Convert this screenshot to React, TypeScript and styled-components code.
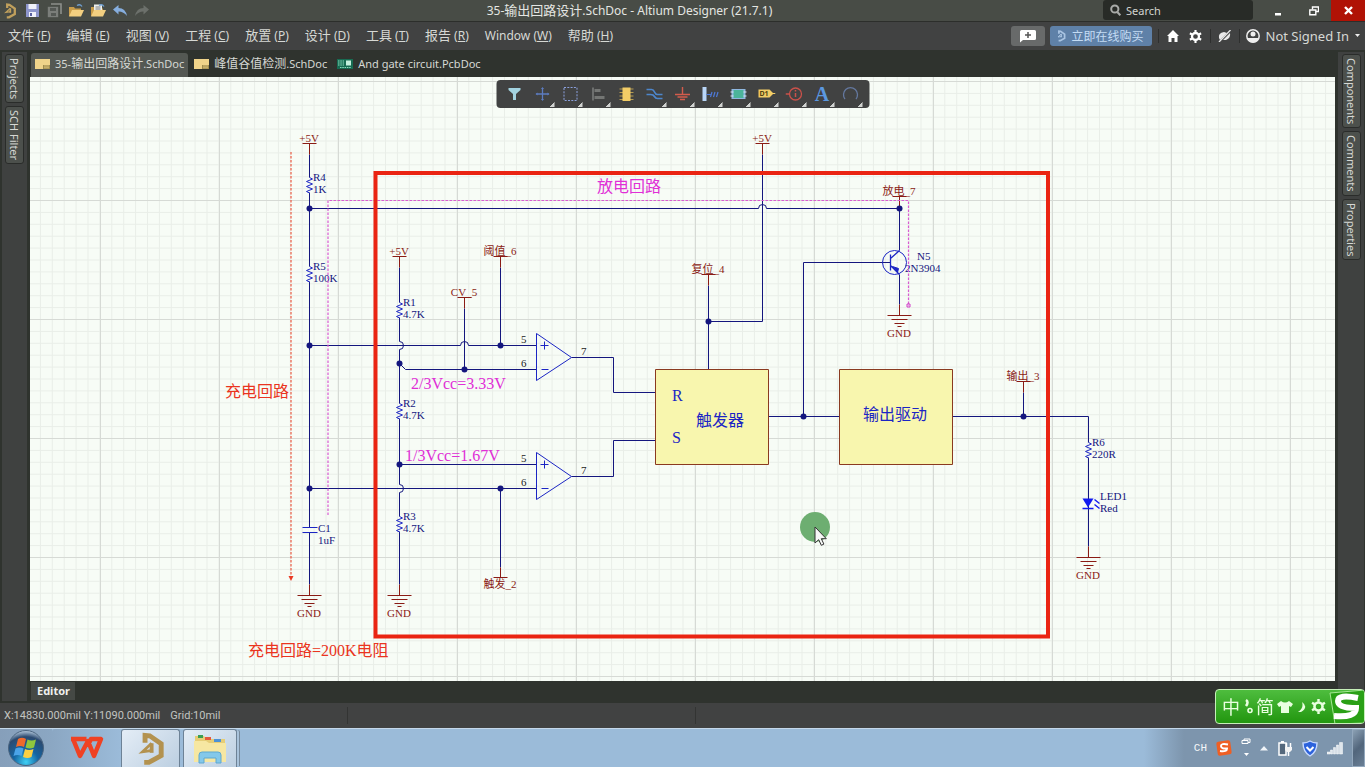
import React, { useState } from 'react';
import styled, { createGlobalStyle } from 'styled-components';

const GlobalStyle = createGlobalStyle`
  * {
    box-sizing: border-box;
  }
  body {
    margin: 0;
    background: #2f332e;
    font-family: "Noto Sans", "Noto Sans CJK SC", sans-serif;
    font-size: 12px;
    color: #d6d8d4;
    overflow: hidden;
  }
  button, input {
    font: inherit;
    color: inherit;
    border: none;
    padding: 0;
    margin: 0;
    background: none;
  }
  svg {
    display: block;
    flex: none;
  }
`;

const Window = styled.div`
  display: flex;
  flex-direction: column;
  height: 100vh;
`;

const TitleBar = styled.header`
  display: grid;
  grid-template-columns: 1fr auto 1fr;
  align-items: center;
  height: 22px;
  flex: none;
  background: #484c46;
  border-bottom: 1px solid #2c2e2b;
`;

const QuickAccess = styled.div`
  display: flex;
  gap: 6px;
  padding-left: 2px;
`;

const IconButton = styled.button`
  display: flex;
  align-items: center;
  justify-content: center;
  width: 16px;
  height: 18px;
`;

const Title = styled.h1`
  margin: 0;
  font-size: 12px;
  font-weight: 400;
  line-height: 20px;
  color: #e4e6e2;
  white-space: nowrap;
  padding-right: 106px;
`;

const Han = styled.span`
  font-size: calc(1em + 1px);
  line-height: 1;
`;

const TitleRight = styled.div`
  display: flex;
  justify-content: flex-end;
  align-items: flex-start;
  height: 21px;
  margin-left: -106px;
`;

const SearchBox = styled.label`
  display: flex;
  align-items: center;
  gap: 5px;
  width: 150px;
  height: 20px;
  margin-right: 8px;
  padding-left: 7px;
  border-radius: 3px;
  background: #282b27;
`;

const SearchInput = styled.input`
  width: 100px;
  outline: none;
  font-size: 11px;
  &::placeholder {
    color: #d2d4d0;
    opacity: 1;
  }
`;

const WindowButton = styled.button<{ $close?: boolean }>`
  display: flex;
  align-items: center;
  justify-content: center;
  width: ${p => (p.$close ? 34 : 35)}px;
  height: 21px;
  background: ${p => (p.$close ? '#b01205' : 'transparent')};
`;

const MenuBar = styled.div`
  display: flex;
  align-items: center;
  justify-content: space-between;
  height: 28px;
  flex: none;
  background: #414242;
`;

const Menus = styled.nav`
  display: flex;
`;

const MenuButton = styled.button`
  padding: 0 8px;
  line-height: 26px;
  white-space: nowrap;
`;

const Account = styled.div`
  display: flex;
  align-items: center;
  height: 28px;
  padding-right: 5px;
`;

const NoteButton = styled.button`
  display: flex;
  align-items: center;
  justify-content: center;
  width: 34px;
  height: 20px;
  margin-right: 5px;
  border-radius: 3px;
  background: #686a6a;
`;

const BuyButton = styled.button`
  display: flex;
  align-items: center;
  gap: 5px;
  width: 102px;
  height: 20px;
  padding: 0 5px;
  border-radius: 3px;
  background: #5f81a8;
  color: #c4dcf4;
  white-space: nowrap;
`;

const Shortcuts = styled.div`
  display: flex;
  gap: 7px;
`;

const Divider = styled.span`
  width: 1px;
  height: 14px;
  margin: 0 6px;
  background: #2e2f2e;
`;

const SignIn = styled.button`
  display: flex;
  align-items: center;
  gap: 6px;
  padding-bottom: 1px;
  font-size: 13px;
  white-space: nowrap;
`;

const Workspace = styled.main`
  display: flex;
  flex: 1;
  min-height: 0;
`;

const SidePanel = styled.aside<{ $right?: boolean }>`
  display: flex;
  flex-direction: column;
  align-items: center;
  gap: 3px;
  width: 30px;
  flex: none;
  padding-top: 2px;
  background: #3f4140;
  border: solid #2f332e;
  border-width: ${p => (p.$right ? '2px 1px 2px 3px' : '2px 3px 2px 2px')};
`;

const SideTab = styled.button`
  writing-mode: vertical-rl;
  width: 19px;
  padding: 3px 0;
  font-size: 11px;
  line-height: 17px;
  background: #4c504c;
  border: 1px solid #2a2c2a;
  border-radius: 3px;
  white-space: nowrap;
`;

const Documents = styled.section`
  display: flex;
  flex-direction: column;
  flex: 1;
  min-width: 0;
`;

const DocumentTabs = styled.div`
  display: flex;
  align-items: flex-end;
  gap: 2px;
  height: 27px;
  flex: none;
  padding-left: 1px;
`;

const DocumentTab = styled.button<{ $active?: boolean }>`
  display: flex;
  align-items: center;
  gap: 5px;
  height: 24px;
  padding: 0 4px 3px;
  border-radius: 3px 3px 0 0;
  background: ${p => (p.$active ? '#545853' : 'transparent')};
  font-size: 11px;
  white-space: nowrap;
`;

const Canvas = styled.div`
  position: relative;
  flex: 1;
  min-height: 0;
  overflow: hidden;
  background: #f7fcf6;
`;

const Sheet = styled.svg`
  width: 100%;
  height: 100%;
  font-family: "Liberation Serif", "Noto Sans CJK SC", serif;
`;

const ActiveBar = styled.div`
  position: absolute;
  top: 3px;
  left: 50%;
  transform: translateX(-50%);
  display: flex;
  padding: 0 5px 0 4px;
  border-radius: 4px;
  background: #414242;
`;

const Tool = styled.button<{ $menu?: boolean }>`
  display: flex;
  align-items: center;
  justify-content: center;
  width: 28px;
  height: 28px;
  background: ${p =>
    p.$menu
      ? 'linear-gradient(135deg, transparent 50%, #d0d2d0 50%) right 2px bottom 1px / 5px 5px no-repeat'
      : 'none'};
`;

const ToolLetter = styled.span`
  font-family: "Liberation Serif", serif;
  font-size: 20px;
  font-weight: 700;
  line-height: 26px;
  color: #5b98e0;
`;

const EditorStrip = styled.div`
  height: 22px;
  flex: none;
  padding: 1px 0 0 1px;
`;

const EditorTab = styled.button`
  height: 18px;
  padding: 0 5px 0 6px;
  background: #454945;
  color: #f0f0ee;
  font-size: 11px;
  font-weight: 700;
  line-height: 18px;
`;

const StatusBar = styled.footer`
  display: flex;
  align-items: center;
  height: 25px;
  flex: none;
  padding-left: 4px;
  background: #414242;
  font-family: Roboto, sans-serif;
  font-size: 11px;
  color: #c2c4c0;
`;

const StatusCell = styled.span`
  display: flex;
  align-items: center;
  gap: 10px;
  width: 344px;
  height: 17px;
  border-right: 1px solid #333433;
  & + & {
    width: 348px;
  }
`;

const Taskbar = styled.div`
  display: flex;
  height: 39px;
  flex: none;
  background: #9bbbd9;
  border-top: 1px solid #c4d8ea;
`;

const StartButton = styled.button`
  display: flex;
  align-items: center;
  justify-content: center;
  width: 52px;
  background: linear-gradient(90deg, #869fba, #8ba7c3);
`;

const TaskButton = styled.button<{ $open?: boolean }>`
  display: flex;
  align-items: center;
  justify-content: center;
  width: ${p => (p.$open ? 59 : 69)}px;
  margin-right: ${p => (p.$open ? 3 : 0)}px;
  background: ${p => (p.$open ? 'linear-gradient(135deg, #e4edf6, #bccfe1)' : 'linear-gradient(90deg, #8ba7c3, #9bbbd9)')};
  border: ${p => (p.$open ? '1px solid #6d8296' : 'none')};
  border-bottom: none;
  border-radius: 3px 3px 0 0;
`;

const TaskStack = styled(TaskButton)`
  width: 54px;
  box-shadow: 3px 0 0 -1px #a9c3db, 4px 0 0 -1px #75899c;
`;

const Tray = styled.div`
  display: flex;
  align-items: center;
  gap: 9px;
  margin-left: auto;
  padding-left: 50px;
  background: linear-gradient(90deg, #9bbbd9, #7d95ad 40px);
`;

const Language = styled.span`
  font-family: "Liberation Mono", monospace;
  font-size: 11px;
  line-height: 14px;
  color: #f4f6f8;
`;

const ShowDesktop = styled.button`
  align-self: stretch;
  width: 13px;
  border: 1px solid #93a8bd;
  background: linear-gradient(135deg, #8ba0b4, #52667c 50%, #6a7f95);
`;

const InputMethod = styled.div`
  position: fixed;
  right: 0;
  bottom: 43px;
  display: flex;
  align-items: center;
  gap: 3px;
  width: 150px;
  height: 35px;
  padding-left: 6px;
  border: 1px solid #c6efb9;
  border-radius: 4px;
  background: linear-gradient(#4ebd3e, #22960f);
  color: #e9ffe0;
  font-size: 18px;
  line-height: 32px;
  overflow: hidden;
`;

const WIRE = '#14167e';
const PART = '#1b25c4';
const PORT = '#8a1b14';

// The UI font draws Chinese a size larger than the Latin beside it
const mixed = (text: string) =>
  text.split(/([\u4e00-\u9fff]+)/).map((part, i) => (i % 2 ? <Han key={i}>{part}</Han> : part));

const Logo = ({ size = 16, color = '#c0a05c' }: { size?: number; color?: string }) => (
  <svg width={size} height={size} viewBox="0 0 16 16" fill="none" stroke={color}>
    <path d="M5.200 5V1.600l2.200.2 5.400 3.700v5.600L7 14.300H4.800" strokeWidth="2.300" />
    <path d="M8.300 5.300v4.500" strokeWidth="1.800" />
    <path d="M8.300 5.300L4 9.300l4.800-.6" strokeWidth="1.300" />
  </svg>
);

const SaveIcon = ({ dim }: { dim?: boolean }) => (
  <svg width="15" height="15" viewBox="0 0 15 15">
    {dim && <path d="M4 1h10v10" fill="none" stroke="#8c8f8b" strokeWidth="1.6" />}
    <path d="M1 1h13v13H1z" fill={dim ? '#7b7e7a' : '#8d95cb'} transform={dim ? 'translate(0 3) scale(.8)' : undefined} />
    <path d={dim ? 'M3 5h6v3H3zM4 10h5v3H4z' : 'M3.5 1h8v5h-8zM4 9h7v5H4z'} fill={dim ? '#555955' : '#f0f1fa'} />
    {!dim && <path d="M5 10h2v3H5z" fill="#5960a0" />}
  </svg>
);

const FolderIcon = ({ page }: { page?: boolean }) => (
  <svg width="16" height="15" viewBox="0 0 16 15">
    <path d="M1 4h5l1 1.5h6V13H1z" fill="#c99d4a" />
    {page && <path d="M4 1.500h8V9H4z" fill="#eef0ee" />}
    {page && <path d="M5.500 4h5M5.500 6h5" stroke="#7c7c7c" />}
    <path d="M1 13.500L4 7h12l-3 6.500z" fill="#f2cf80" />
    <path d="M9 2.500q3-2 5 1" fill="none" stroke="#6f9fd0" strokeWidth="1.300" />
  </svg>
);

const ArrowIcon = ({ redo }: { redo?: boolean }) => (
  <svg width="16" height="14" viewBox="0 0 16 14">
    <g transform={redo ? 'translate(16 0) scale(-1 1)' : undefined}>
      <path d="M1 5.500L6.500 1v3q7 .2 8.500 8-3.500-4.600-8.500-4.500v3z" fill={redo ? '#6c706b' : '#86aede'} />
    </g>
  </svg>
);

const SchIcon = () => (
  <svg width="15" height="12" viewBox="0 0 15 12">
    <path d="M0 1h15v10H0z" fill="#f0d48a" />
    <path d="M8 7h7v4H8z" fill="#a08d4e" />
    <path d="M9 8h5M9 9.800h5" stroke="#f0d48a" strokeWidth=".7" />
  </svg>
);

const PcbIcon = () => (
  <svg width="16" height="12" viewBox="0 0 16 12">
    <path d="M0 1h16v10H0z" fill="#176b52" />
    <path d="M1 3h6M1 5h6M1 7h6M3 9.500h11" stroke="#8fe0c0" strokeDasharray="1.500 .8" />
    <path d="M9 2.500h5v5H9z" fill="#c4f0dd" />
  </svg>
);

const GearIcon = ({ size, fill }: { size: number; fill: string }) => (
  <svg width={size} height={size} viewBox="0 0 16 16">
    <circle cx="8" cy="8" r="4.300" fill="none" stroke={fill} strokeWidth="2.800" />
    <path d="M8 0v3M8 13v3M1.100 4l2.600 1.500M12.300 10.500l2.600 1.500M1.100 12l2.600-1.500M12.300 5.500L14.900 4" stroke={fill} strokeWidth="2.600" />
  </svg>
);

const ToolIcon = ({ children }: { children: React.ReactNode }) => (
  <svg width="18" height="18" viewBox="0 0 18 18">{children}</svg>
);

const tools: { name: string; menu?: boolean; icon: React.ReactNode }[] = [
  { name: 'Filter', icon: <ToolIcon><path d="M3 3h12v2l-4.500 4v6h-3V9L3 5z" fill="#a3d3e0" /></ToolIcon> },
  { name: 'Move', menu: true, icon: <ToolIcon><path d="M9 3v12M3 9h12" stroke="#5c7cc0" strokeWidth="1.300" /><path d="M7.500 4L9 2l1.500 2zM7.500 14L9 16l1.500-2zM4 7.500L2 9l2 1.500zM14 7.500L16 9l-2 1.500z" fill="#5c7cc0" /></ToolIcon> },
  { name: 'Select', menu: true, icon: <ToolIcon><path d="M2.500 2.500h13v13h-13z" stroke="#8ba0dc" fill="none" strokeDasharray="2 1.300" /></ToolIcon> },
  { name: 'Align', menu: true, icon: <ToolIcon><path d="M3.500 2.500v13" stroke="#9a9c9a" /><path d="M5 4h6v3H5zM5 11h10v3H5z" fill="#747674" /></ToolIcon> },
  { name: 'Place part', icon: <ToolIcon><path d="M2 4h14M2 7.500h14M2 11h14M2 14.500h14" stroke="#b49a52" /><path d="M5 2.500h8v13.500H5z" fill="#f3cd66" /></ToolIcon> },
  { name: 'Place wire', menu: true, icon: <ToolIcon><path d="M1 4.500h5q2 0 3 2.500t3 2.500h5M1 9.500h4q3 0 4 2t3 2h5" stroke="#4d86cc" fill="none" strokeWidth="1.700" /></ToolIcon> },
  { name: 'Place power port', menu: true, icon: <ToolIcon><path d="M9 2v7M1.500 9.500h15M4 12h10M6.500 14.500h5" stroke="#d35c4c" fill="none" strokeWidth="1.400" /></ToolIcon> },
  { name: 'Place bus', menu: true, icon: <ToolIcon><path d="M1 2h4v14H1z" fill="#b9d6f8" /><path d="M5 9.500h4M9 12l1.500-5M12 12l1.500-5M15 12l1.500-5" stroke="#4d79d8" fill="none" strokeWidth="1.200" /></ToolIcon> },
  { name: 'Place sheet symbol', menu: true, icon: <ToolIcon><path d="M2 4h14v10H2z" fill="#8fb8e0" /><path d="M4 5h10v8H4z" fill="#4bb49a" /><path d="M1 7h3M1 11h3M14 7h3M14 11h3" stroke="#dbe9f5" /></ToolIcon> },
  { name: 'Place port', menu: true, icon: <ToolIcon><path d="M1 4.500h11l4 4-4 4H1z" fill="#f3cd66" /><text x="2" y="11" fontSize="7" fontWeight="700" fill="#54430f">D1</text><path d="M15 8.500h3" stroke="#f3cd66" /></ToolIcon> },
  { name: 'Place directive', menu: true, icon: <ToolIcon><circle cx="10" cy="9" r="6" fill="none" stroke="#c9514a" strokeWidth="1.300" /><path d="M0 9h4M10 8v4M10 5v1.500" stroke="#c9514a" strokeWidth="1.500" /></ToolIcon> },
  { name: 'Place text', menu: true, icon: <ToolLetter>A</ToolLetter> },
  { name: 'Place arc', menu: true, icon: <ToolIcon><path d="M3.500 14A7 7 0 1 1 14.500 14" fill="none" stroke="#64789f" strokeWidth="1.300" /></ToolIcon> },
];

interface LabelProps {
  x: number;
  y: number;
  fill?: string;
  size?: number;
  anchor?: 'middle';
  children: React.ReactNode;
}

// Lines sit on half pixels, so text is moved back onto whole ones
const Label = ({ x, y, fill = WIRE, size = 11, anchor, children }: LabelProps) => (
  <text x={x} y={y} fill={fill} fontSize={size} textAnchor={anchor} transform="translate(-.5 -.5)">{children}</text>
);

const Resistor = ({ x, y, name, value }: { x: number; y: number; name: string; value: string }) => (
  <g>
    <path d={`M${x} ${y}l3 1.500-6 2.500 6 2.500-6 2.500 6 2.500-6 2.500 3 1.500`} fill="none" stroke={PART} />
    <Label x={x + 4} y={y + 4}>{name}</Label>
    <Label x={x + 4} y={y + 16}>{value}</Label>
  </g>
);

const Ground = ({ x, y }: { x: number; y: number }) => (
  <g>
    <path d={`M${x} ${y - 11}v11M${x - 12} ${y}h24M${x - 8} ${y + 4}h16M${x - 5} ${y + 8}h10M${x - 2} ${y + 11}h4`} stroke={PORT} />
    <Label x={x} y={y + 22} fill={PORT} anchor="middle">GND</Label>
  </g>
);

const Port = ({ x, y, children }: { x: number; y: number; children: string }) => (
  <g>
    <path d={`M${x - 7} ${y}h14M${x} ${y}v11`} stroke={PORT} />
    <Label x={x} y={y - 1} fill={PORT} anchor="middle">{children}</Label>
  </g>
);

const Comparator = ({ y }: { y: number }) => (
  <g>
    <path d={`M536 ${y - 24}v47l35-23zM540 ${y - 12}h8M544 ${y - 16}v8M541 ${y + 12}h7`} fill="none" stroke={PART} />
    <Label x={521} y={y - 14} fill="#222">5</Label>
    <Label x={521} y={y + 10} fill="#222">6</Label>
    <Label x={581} y={y - 2} fill="#222">7</Label>
  </g>
);

const junctions = [
  [309, 208], [309, 345], [309, 488], [399, 363], [399, 464], [464, 369], [500, 345],
  [500, 488], [708, 321], [803, 416], [899, 208], [1023, 416],
];

const Schematic = () => (
  <Sheet role="img" aria-label="35-输出回路设计">
    <defs>
      <pattern id="minor" x="9.900" y="4" width="11.900" height="11.900" patternUnits="userSpaceOnUse">
        <path d="M.5 0v12M0 .5h12" stroke="#e9eee8" />
      </pattern>
      <pattern id="major" x="70" y="4" width="119" height="119" patternUnits="userSpaceOnUse">
        <path d="M.5 0v119M0 .5h119" stroke="#d6dad5" />
      </pattern>
    </defs>
    <rect width="100%" height="100%" fill="url(#minor)" />
    <rect width="100%" height="100%" fill="url(#major)" />
    <g transform="translate(-30 -77)">
      <g transform="translate(.5 .5)">
        <path
          d="M309 154V177M309 192V266M309 281V527M309 532V584
            M309 208H758a4 4 0 0 1 8 0H899 M309 345H460a4 4 0 0 1 8 0H536
            M399 267V302M399 317V341a4 4 0 0 1 0 8V403M399 418V484a4 4 0 0 1 0 8V516M399 531V584
            M399 363l6 6H536 M399 464H536 M309 488H536 M500 267V345 M464 308V369 M500 488V567
            M571 357H613V392H655 M571 476H613V440H655 M708 285V369 M708 321H762V154
            M768 416H839 M803 416V262H890 M952 416H1088V442 M1088 457V546 M1023 392V416
            M899 207V250 M899 274V304"
          fill="none"
          stroke={WIRE}
        />
        <path d="M302 527h15M302 532h15" stroke={PART} />
        <Resistor x={309} y={177} name="R4" value="1K" />
        <Resistor x={309} y={266} name="R5" value="100K" />
        <Resistor x={399} y={302} name="R1" value="4.7K" />
        <Resistor x={399} y={403} name="R2" value="4.7K" />
        <Resistor x={399} y={516} name="R3" value="4.7K" />
        <Resistor x={1088} y={442} name="R6" value="220R" />
        <Label x={318} y={532}>C1</Label>
        <Label x={318} y={544}>1uF</Label>
        <Port x={309} y={143}>+5V</Port>
        <Port x={399} y={256}>+5V</Port>
        <Port x={762} y={143}>+5V</Port>
        <Port x={500} y={256}>阈值_6</Port>
        <Port x={464} y={297}>CV_5</Port>
        <Port x={708} y={274}>复位_4</Port>
        <Port x={899} y={196}>放电_7</Port>
        <Port x={1023} y={381}>输出_3</Port>
        <path d="M493 577h14M500 567v10" stroke={PORT} />
        <Label x={500} y={588} fill={PORT} anchor="middle">触发_2</Label>
        <Ground x={309} y={595} />
        <Ground x={399} y={595} />
        <Ground x={899} y={315} />
        <Ground x={1088} y={557} />
        <Comparator y={357} />
        <Comparator y={476} />
        <path d="M655 369h113v95H655zM839 369h113v95H839z" fill="#f8f6ae" stroke="#8a3a20" />
        <Label x={672} y={401} fill={PART} size={16}>R</Label>
        <Label x={672} y={443} fill={PART} size={16}>S</Label>
        <Label x={696} y={426} fill={PART} size={16}>触发器</Label>
        <Label x={863} y={420} fill={PART} size={16}>输出驱动</Label>
        <circle cx="894" cy="262" r="12" fill="none" stroke={PART} />
        <path d="M890 254v16M890 258l9-8M890 265l9 9" stroke={PART} strokeWidth="1.300" fill="none" />
        <path d="M892 266l6 2-1 4z" fill={PART} stroke={PART} />
        <Label x={917} y={260}>N5</Label>
        <Label x={905} y={272}>2N3904</Label>
        <path d="M1082 498h11l-5.500 9z" fill="#1119f0" />
        <path d="M1082 508h11M1094 499l5 4M1094 504l5 4" stroke="#1119f0" strokeWidth="1.400" />
        <Label x={1100} y={500}>LED1</Label>
        <Label x={1100} y={512}>Red</Label>
        {junctions.map(([x, y]) => <circle key={`${x}-${y}`} cx={x} cy={y} r="3" fill={WIRE} />)}
        <Label x={597} y={192} fill="#e02fd6" size={16}>放电回路</Label>
        <Label x={411} y={389} fill="#e02fd6" size={16}>2/3Vcc=3.33V</Label>
        <Label x={405} y={461} fill="#e02fd6" size={16}>1/3Vcc=1.67V</Label>
        <Label x={225} y={397} fill="#ea3420" size={16}>充电回路</Label>
        <Label x={248} y={656} fill="#ea3420" size={16}>充电回路=200K电阻</Label>
      </g>
      <path d="M291 152V577" stroke="#ea5a44" strokeDasharray="2.500 1.500" strokeWidth="1.200" />
      <path d="M288.500 576h5l-2.500 5z" fill="#ea3a24" />
      <path d="M328 515V200.500H908.500V306" fill="none" stroke="#d95bd2" strokeDasharray="2.500 1.500" strokeWidth="1.200" />
      <path d="M907 304h3v3h-3z" fill="none" stroke="#d03cc8" />
      <rect x="375.500" y="173" width="672.500" height="463.500" fill="none" stroke="#ea2412" strokeWidth="4" />
      <circle cx="815" cy="527" r="15" fill="#6dae71" />
      <path d="M815 527v16l3.700-3.300 2.600 5.600 2.600-1.200-2.600-5.400h5z" fill="#f6f8f6" stroke="#333" />
    </g>
  </Sheet>
);

const menus = [
  ['文件', 'F'], ['编辑', 'E'], ['视图', 'V'], ['工程', 'C'], ['放置', 'P'],
  ['设计', 'D'], ['工具', 'T'], ['报告', 'R'], ['Window', 'W'], ['帮助', 'H'],
];

const documents = ['35-输出回路设计.SchDoc', '峰值谷值检测.SchDoc', 'And gate circuit.PcbDoc'];

function App() {
  const [active, setActive] = useState(0);
  const [search, setSearch] = useState('');

  return (
    <Window>
      <GlobalStyle />
      <TitleBar>
        <QuickAccess>
          <IconButton aria-label="Altium Designer"><Logo /></IconButton>
          <IconButton aria-label="Save"><SaveIcon /></IconButton>
          <IconButton aria-label="Save all"><SaveIcon dim /></IconButton>
          <IconButton aria-label="Open"><FolderIcon /></IconButton>
          <IconButton aria-label="Open project"><FolderIcon page /></IconButton>
          <IconButton aria-label="Undo"><ArrowIcon /></IconButton>
          <IconButton aria-label="Redo"><ArrowIcon redo /></IconButton>
        </QuickAccess>
        <Title>{mixed('35-输出回路设计.SchDoc - Altium Designer (21.7.1)')}</Title>
        <TitleRight>
          <SearchBox>
            <svg width="11" height="12" viewBox="0 0 11 12" fill="none" stroke="#a8aaa8" strokeWidth="2">
              <circle cx="4.800" cy="5" r="3.600" />
              <path d="M7.300 8l3 3.300" />
            </svg>
            <SearchInput aria-label="Search" placeholder="Search" value={search} onChange={e => setSearch(e.target.value)} />
          </SearchBox>
          <WindowButton aria-label="Minimize">
            <svg width="10" height="10" viewBox="0 0 10 10"><path d="M1 7h6v2.500H1z" fill="#fff" /></svg>
          </WindowButton>
          <WindowButton aria-label="Restore">
            <svg width="10" height="10" viewBox="0 0 10 10" fill="none" stroke="#fff" strokeWidth="1.400">
              <path d="M3.500 3.500V1h6v4.500H7" /><path d="M.8 4h6v4.800h-6z" />
            </svg>
          </WindowButton>
          <WindowButton aria-label="Close" $close>
            <svg width="9" height="9" viewBox="0 0 9 9"><path d="M1 1l7 7M8 1L1 8" stroke="#fff" strokeWidth="2.400" /></svg>
          </WindowButton>
        </TitleRight>
      </TitleBar>

      <MenuBar>
        <Menus>
          {menus.map(([name, key]) => <MenuButton key={key}>{mixed(name)} (<u>{key}</u>)</MenuButton>)}
        </Menus>
        <Account>
          <NoteButton aria-label="Comment">
            <svg width="17" height="13" viewBox="0 0 17 13">
              <path d="M2.500 0h13q1.500 0 1.500 1.500v7q0 1.500-1.500 1.500H4l-3 2.500V1.500Q1 0 2.500 0z" fill="#fff" />
              <path d="M9 2v6M6 5h6" stroke="#555" strokeWidth="1.500" />
            </svg>
          </NoteButton>
          <BuyButton><Logo size={12} color="#a9c4e2" />立即在线购买</BuyButton>
          <Divider />
          <Shortcuts>
            <IconButton aria-label="Home">
              <svg width="12" height="12" viewBox="0 0 12 12"><path d="M6 0l6 6h-1.500v6h-3V8h-3v4h-3V6H0z" fill="#fff" /></svg>
            </IconButton>
            <IconButton aria-label="Settings"><GearIcon size={13} fill="#fff" /></IconButton>
          </Shortcuts>
          <Divider />
          <IconButton aria-label="Offline">
            <svg width="13" height="12" viewBox="0 0 13 12">
              <path d="M1 8q-1-5 5-6l3 1-7 7zM5 10l7-7q1 5-4 7z" fill="#e8e8e8" />
              <path d="M1 12L12.500 0" stroke="#e8e8e8" strokeWidth="1.300" />
            </svg>
          </IconButton>
          <Divider />
          <SignIn>
            <svg width="14" height="14" viewBox="0 0 14 14">
              <circle cx="7" cy="7" r="6.200" fill="none" stroke="#eee" strokeWidth="1.500" />
              <circle cx="7" cy="5" r="2.500" fill="#eee" />
              <path d="M1.500 9h11q-1.500 4.500-5.500 4.500T1.500 9z" fill="#eee" />
            </svg>
            Not Signed In
            <svg width="5" height="3" viewBox="0 0 5 3"><path d="M0 0h5L2.500 3z" fill="#eee" /></svg>
          </SignIn>
        </Account>
      </MenuBar>

      <Workspace>
        <SidePanel>
          <SideTab>Projects</SideTab>
          <SideTab>SCH Filter</SideTab>
        </SidePanel>
        <Documents>
          <DocumentTabs>
            {documents.map((name, i) => (
              <DocumentTab key={name} $active={i === active} onClick={() => setActive(i)}>
                {name.endsWith('PcbDoc') ? <PcbIcon /> : <SchIcon />}
                <span>{mixed(name)}</span>
              </DocumentTab>
            ))}
          </DocumentTabs>
          <Canvas>
            <Schematic />
            <ActiveBar>
              {tools.map(tool => (
                <Tool key={tool.name} aria-label={tool.name} $menu={tool.menu}>{tool.icon}</Tool>
              ))}
            </ActiveBar>
          </Canvas>
          <EditorStrip><EditorTab>Editor</EditorTab></EditorStrip>
        </Documents>
        <SidePanel $right>
          <SideTab>Components</SideTab>
          <SideTab>Comments</SideTab>
          <SideTab>Properties</SideTab>
        </SidePanel>
      </Workspace>

      <StatusBar>
        <StatusCell><span>X:14830.000mil Y:11090.000mil</span><span>Grid:10mil</span></StatusCell>
        <StatusCell />
      </StatusBar>

      <Taskbar>
        <StartButton aria-label="Start">
          <svg width="38" height="38" viewBox="0 0 38 38">
            <defs>
              <radialGradient id="orb" cx=".5" cy=".9" r=".9">
                <stop offset="0" stopColor="#3fd0f5" />
                <stop offset=".4" stopColor="#1465a3" />
                <stop offset=".8" stopColor="#2b4a70" />
                <stop offset="1" stopColor="#b8cde0" />
              </radialGradient>
            </defs>
            <circle cx="19" cy="19" r="17.500" fill="url(#orb)" stroke="#4b6580" />
            <path d="M11 10q4-2.500 8 0l-2 8q-4-2-8 0z" fill="#ee6a2c" />
            <path d="M20.500 10.500q4 2 8.500 0l-2 8q-4 2-8.500 0z" fill="#8fc63e" />
            <path d="M8.500 19.500q4-2 8 0l-2 7.500q-4-2-8 0z" fill="#4aa3e8" />
            <path d="M18 20q4 2 8.500 0l-2 8q-4 2-8.500 0z" fill="#fbd044" />
          </svg>
        </StartButton>
        <TaskButton aria-label="WPS">
          <svg width="34" height="24" viewBox="0 0 34 24" fill="none" stroke="#ef4123" strokeWidth="4.500">
            <path d="M1 3h15.500M3 3l7 17L18 5l6 15L31 3H21l-3 6" strokeLinejoin="round" />
          </svg>
        </TaskButton>
        <TaskButton $open aria-label="Altium Designer"><Logo size={34} color="#b3924f" /></TaskButton>
        <TaskStack $open aria-label="Explorer">
          <svg width="34" height="32" viewBox="0 0 34 32">
            <path d="M2 3h9l2 3h19v22H2z" fill="#e6cd76" />
            <path d="M5 2h5v3H5z" fill="#3a9e54" />
            <path d="M12 4h6v3h-6z" fill="#e3593f" />
            <path d="M21 6h7v3h-7z" fill="#4d92d6" />
            <path d="M1 8h12l3 2h17v19H1z" fill="#f6e7a2" />
            <path d="M6 30V22q0-3 3-3h16q3 0 3 3v8h-5v-5H11v5z" fill="#84c8ea" stroke="#5fa8d0" />
          </svg>
        </TaskStack>
        <Tray>
          <Language>CH</Language>
          <svg width="16" height="16" viewBox="0 0 16 16">
            <rect x="1" y="1" width="14" height="14" rx="2" fill="#ef5f23" transform="rotate(-8 8 8)" />
            <path d="M12 4.500Q5 3 5 6t6 2.500Q11 12 4 11" fill="none" stroke="#fff" strokeWidth="2" />
          </svg>
          <svg width="10" height="20" viewBox="0 0 10 20" fill="none" stroke="#fff">
            <path d="M3 2.500V1h6v3.500H7M1 2.500h6v3H1z" /><path d="M3 15h5l-2.500 3z" fill="#fff" stroke="none" />
          </svg>
          <svg width="8" height="5" viewBox="0 0 8 5"><path d="M0 4.500L4 0l4 4.500z" fill="#f0f4f8" /></svg>
          <svg width="16" height="17" viewBox="0 0 16 17">
            <path d="M2 3h7v12H2z" fill="#54687c" stroke="#fff" strokeWidth="1.500" /><path d="M4 1h3v2H4z" fill="#fff" />
            <path d="M8 7h7v3l-2 2h-3l-2-2z" fill="#f4f4f4" /><path d="M9.500 3v4M13.500 3v4M11.500 12v4" stroke="#fff" strokeWidth="1.500" />
          </svg>
          <svg width="16" height="17" viewBox="0 0 16 17">
            <path d="M8 1q3 2 7 2 0 9-7 13Q1 12 1 3q4 0 7-2z" fill="#2c62dc" stroke="#c8daff" strokeWidth="1.400" />
            <path d="M4.500 7l3.500 3.500L11.500 7" fill="none" stroke="#fff" strokeWidth="2" />
          </svg>
          <svg width="16" height="13" viewBox="0 0 16 13">
            <path d="M0 10h3v2H0zM3.500 8h2v4h-2zM6.500 5.500h2V12h-2zM9.500 3h2v9h-2zM12.500.500h3V12h-3z" fill="#dfe6ec" stroke="#fff" strokeWidth=".5" />
          </svg>
          <ShowDesktop aria-label="Show desktop" />
        </Tray>
      </Taskbar>

      <InputMethod>
        <span>中</span>
        <svg width="10" height="16" viewBox="0 0 10 16" fill="none" stroke="#e9ffe0" strokeWidth="1.600">
          <path d="M3 1q3 2 0 6" strokeWidth="2.600" /><circle cx="7" cy="11.500" r="2" />
        </svg>
        <span>简</span>
        <svg width="16" height="12" viewBox="0 0 16 12"><path d="M4 0q4 3 8 0l4 3-2 3-2-1v7H4V5L2 6 0 3z" fill="#e9ffe0" /></svg>
        <svg width="12" height="12" viewBox="0 0 12 12"><path d="M6 1q7 5-1 10H2q6-4 4-10z" fill="#e9ffe0" /></svg>
        <GearIcon size={15} fill="#e9ffe0" />
        <svg width="36" height="34" viewBox="0 0 36 34">
          <path d="M1 3L36 0v33L6 34z" fill="#2aa016" stroke="#a6e795" />
          <path d="M29 8Q9 4 9 11t18 7Q27 28 5 26" fill="none" stroke="#fff" strokeWidth="6" />
        </svg>
      </InputMethod>
    </Window>
  );
}

export default App;
